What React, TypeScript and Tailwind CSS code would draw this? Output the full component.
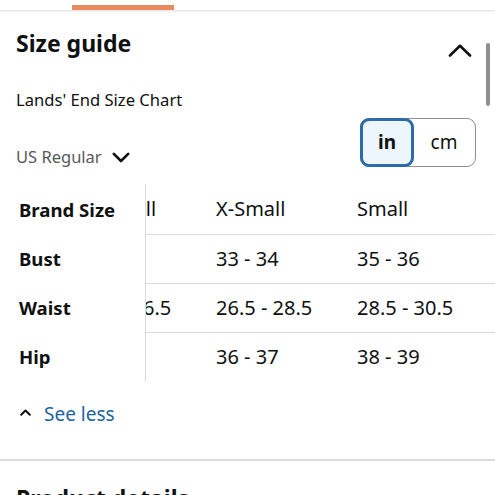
import React from "react";

const cols = ["XX-Small", "X-Small", "Small", "Medium"];
const rows: { label: string; values: string[] }[] = [
  { label: "Bust", values: ["31 - 32", "33 - 34", "35 - 36", "37 - 38"] },
  { label: "Waist", values: ["24.5 - 26.5", "26.5 - 28.5", "28.5 - 30.5", "30.5 - 32.5"] },
  { label: "Hip", values: ["34 - 35", "36 - 37", "38 - 39", "40 - 41"] },
];

export default function App() {
  return (
    <div className="relative w-[495px] h-[495px] overflow-hidden bg-white text-[#0f1111] font-['Noto_Sans',sans-serif]">
      {/* top tab strip */}
      <div className="h-[10px] pt-[5px]">
        <div className="ml-[72px] w-[102px] h-[5px] bg-[#e9895f]" />
      </div>
      <div className="h-[3px] bg-gradient-to-b from-[#e4e4e4] to-white" />

      <div className="px-4">
        {/* title */}
        <div className="mt-[14px] flex items-start justify-between">
          <h2 className="text-[23px] leading-[32px] font-bold">Size guide</h2>
          <svg className="mt-[17px] mr-[7px]" width="24" height="13" viewBox="0 0 24 13" fill="none">
            <polyline points="2,11.5 12,1.8 22,11.5" stroke="#0f1111" strokeWidth="2.6" strokeLinecap="round" strokeLinejoin="round" />
          </svg>
        </div>

        <div className="mt-[29px] text-[16.6px] leading-[24px]">Lands' End Size Chart</div>

        {/* region + unit toggle */}
        <div className="mt-[6px] flex items-end justify-between">
          <div className="flex items-center mb-[-1px]">
            <span className="text-[16.5px] leading-[22px] text-[#565959]">US Regular</span>
            <svg className="ml-[10px] mt-[1px]" width="18" height="11" viewBox="0 0 18 11" fill="none">
              <polyline points="1.8,1.8 9,9 16.2,1.8" stroke="#0f1111" strokeWidth="2.6" strokeLinecap="round" strokeLinejoin="round" />
            </svg>
          </div>
          <div className="mr-[3px] flex h-[49px] w-[116px] rounded-[9px] border border-[#8d9096]">
            <div className="-m-px flex w-[54px] items-center justify-center rounded-[9px] border-[3px] border-[#2e6ca7] bg-[#edf6fd] text-[19px] font-bold">
              in
            </div>
            <div className="flex flex-1 items-center justify-center text-[19px]">cm</div>
          </div>
        </div>

        {/* table */}
        <div className="mt-[17px] flex">
          <div className="w-[130px] shrink-0 border-r border-[#dcdcdc] pl-[3px] text-[18.6px] font-bold">
            <div className="flex h-[51px] items-center whitespace-nowrap">Brand Size</div>
            {rows.map((r) => (
              <div key={r.label} className="flex h-[49px] items-center pb-[1px]">
                {r.label}
              </div>
            ))}
          </div>
          <div className="-mr-4 flex-1 overflow-hidden">
            <div className="text-[20px]">
              <div className="flex h-[51px] items-center border-b border-[#dcdcdc]">
                <div className="ml-[-87px] flex">
                  {cols.map((c) => (
                    <div key={c} className="w-[141px] shrink-0 pl-4 whitespace-nowrap">
                      {c}
                    </div>
                  ))}
                </div>
              </div>
              {rows.map((r, i) => (
                <div
                  key={r.label}
                  className={i < rows.length - 1 ? "flex h-[49px] items-center border-b border-[#dcdcdc]" : "flex h-[49px] items-center pb-[1px]"}
                >
                  <div className="ml-[-87px] flex">
                    {r.values.map((v, j) => (
                      <div key={j} className="w-[141px] shrink-0 pl-4 whitespace-nowrap">
                        {v}
                      </div>
                    ))}
                  </div>
                </div>
              ))}
            </div>
          </div>
        </div>

        {/* see less */}
        <div className="mt-[19px] flex items-center">
          <svg className="ml-[4px] mr-[13px] mt-[-3px]" width="11" height="7" viewBox="0 0 11 7" fill="none">
            <polyline points="1.2,5.8 5.5,1.5 9.8,5.8" stroke="#0f1111" strokeWidth="2" strokeLinecap="round" strokeLinejoin="round" />
          </svg>
          <span className="text-[19px] leading-[26px] text-[#2162a1]">See less</span>
        </div>
      </div>

      <div className="mt-[32px] h-[2px] bg-[#dddddd]" />

      <div className="mt-[21px] px-4 text-[23px] leading-[32px] font-bold">Product details</div>

      {/* scrollbar */}
      <div className="absolute right-[5px] top-[43px] h-[63px] w-[4px] rounded-full bg-[#8f8f8f]" />
    </div>
  );
}
